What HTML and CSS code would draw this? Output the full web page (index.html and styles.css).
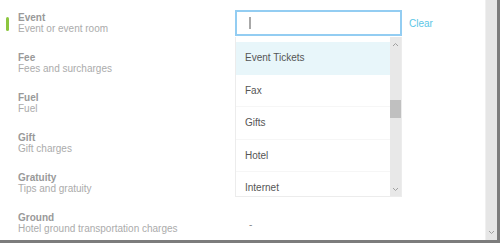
FILE: index.html
```html
<!DOCTYPE html>
<html lang="en">
<head>
    <meta charset="UTF-8">
    <title>Expense types</title>
    <link rel="stylesheet" href="styles.css">
</head>
<body>
    <div class="frame">
        <div class="panel">
            <div class="row active">
                <div class="marker"></div>
                <div class="label">
                    <div class="name">Event</div>
                    <div class="desc">Event or event room</div>
                </div>
                <div class="value">
                    <div class="picker">
                        <div class="input"><span class="caret"></span></div>
                        <a class="clear" href="#">Clear</a>
                        <div class="dropdown">
                            <div class="options">
                                <div class="option selected">Event Tickets</div>
                                <div class="option">Fax</div>
                                <div class="option">Gifts</div>
                                <div class="option">Hotel</div>
                                <div class="option">Internet</div>
                            </div>
                            <div class="list-scroll">
                                <svg class="chev" width="7" height="5" viewBox="0 0 7 5"><path d="M1 4 L3.5 1.5 L6 4" fill="none" stroke="#a0a0a0" stroke-width="1"/></svg>
                                <div class="list-track"><div class="list-thumb"></div></div>
                                <svg class="chev" width="7" height="5" viewBox="0 0 7 5"><path d="M1 1 L3.5 3.5 L6 1" fill="none" stroke="#a0a0a0" stroke-width="1"/></svg>
                            </div>
                        </div>
                    </div>
                </div>
            </div>
            <div class="row">
                <div class="marker"></div>
                <div class="label">
                    <div class="name">Fee</div>
                    <div class="desc">Fees and surcharges</div>
                </div>
                <div class="value"></div>
            </div>
            <div class="row">
                <div class="marker"></div>
                <div class="label">
                    <div class="name">Fuel</div>
                    <div class="desc">Fuel</div>
                </div>
                <div class="value"></div>
            </div>
            <div class="row">
                <div class="marker"></div>
                <div class="label">
                    <div class="name">Gift</div>
                    <div class="desc">Gift charges</div>
                </div>
                <div class="value"></div>
            </div>
            <div class="row">
                <div class="marker"></div>
                <div class="label">
                    <div class="name">Gratuity</div>
                    <div class="desc">Tips and gratuity</div>
                </div>
                <div class="value"></div>
            </div>
            <div class="row">
                <div class="marker"></div>
                <div class="label">
                    <div class="name">Ground</div>
                    <div class="desc">Hotel ground transportation charges</div>
                </div>
                <div class="value"><span class="dash">-</span></div>
            </div>
        </div>
        <div class="scrollbar">
            <svg class="chev" width="7" height="5" viewBox="0 0 7 5"><path d="M1 1 L3.5 3.5 L6 1" fill="none" stroke="#a0a0a0" stroke-width="1"/></svg>
        </div>
    </div>
</body>
</html>
```

FILE: styles.css
```css
body {
    margin: 0;
    font-family: "Liberation Sans", Arial, sans-serif;
    background-color: #ffffff;
}

.frame {
    width: 497px;
    height: 240px;
    display: flex;
    border-right: 3px solid #7c7c7c;
    border-bottom: 3px solid #7c7c7c;
    overflow: hidden;
}

.panel {
    flex: 1;
    background-color: #ffffff;
}

.row {
    display: flex;
    height: 40px;
    padding-left: 6px;
}

.marker {
    width: 3px;
    height: 14px;
    margin-top: 17px;
    margin-right: 9px;
    border-radius: 2px;
}

.row.active .marker {
    background-color: #8cc63f;
}

.label {
    width: 217px;
    padding-top: 12px;
    font-size: 10px;
    line-height: 11px;
}

.name {
    font-weight: bold;
    color: #999999;
}

.desc {
    color: #ababab;
}

.value {
    flex: 1;
    display: flex;
    align-items: center;
}

.dash {
    padding-left: 14px;
    padding-top: 8px;
    font-size: 10px;
    color: #888888;
}

.picker {
    position: relative;
    display: flex;
    align-items: center;
    align-self: flex-start;
    margin-top: 10px;
}

.input {
    box-sizing: border-box;
    width: 167px;
    height: 26px;
    border: 2px solid #93cdf2;
    display: flex;
    align-items: center;
    padding-left: 12px;
}

.caret {
    width: 2px;
    height: 12px;
    background-color: #a8a8a8;
}

.clear {
    margin-left: 7px;
    font-size: 10px;
    color: #5cc6e6;
    text-decoration: none;
    padding-top: 1px;
}

.dropdown {
    position: absolute;
    top: 27px;
    left: 0;
    box-sizing: border-box;
    width: 167px;
    height: 160px;
    border: 1px solid #ececec;
    border-top: none;
    background-color: #ffffff;
    display: flex;
    overflow: hidden;
}

.options {
    flex: 1;
    padding-top: 5px;
}

.option {
    height: 32.5px;
    display: flex;
    align-items: center;
    padding-left: 9px;
    font-size: 10px;
    color: #555555;
    border-bottom: 1px solid #f6f6f6;
    box-sizing: border-box;
}

.option.selected {
    background-color: #e8f6fa;
    border-bottom-color: #e8f6fa;
}

.list-scroll {
    width: 11px;
    background-color: #e8e8e8;
    display: flex;
    flex-direction: column;
    align-items: center;
    padding: 5px 0 4px;
}

.list-track {
    flex: 1;
    width: 100%;
    padding-top: 53px;
}

.list-thumb {
    height: 18px;
    background-color: #c0c0c0;
}

.scrollbar {
    width: 11px;
    background-color: #e6e6e6;
    border-left: 1px solid #f0f0f0;
    display: flex;
    flex-direction: column;
    justify-content: flex-end;
    align-items: center;
    padding-bottom: 5px;
}
```
